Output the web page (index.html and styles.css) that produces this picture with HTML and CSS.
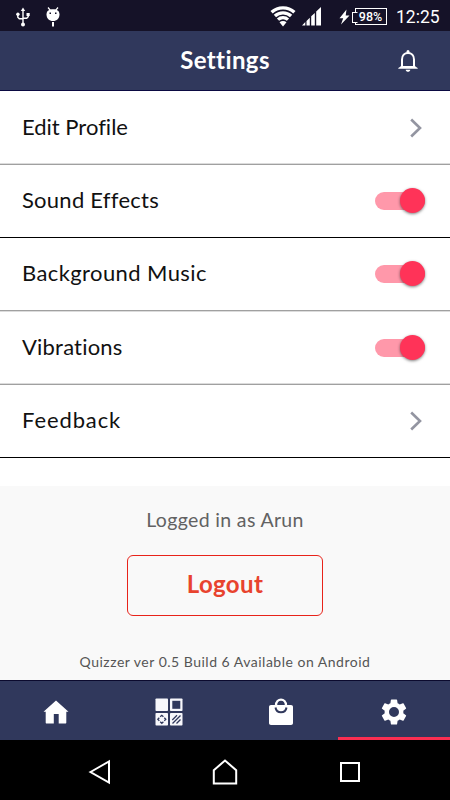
FILE: index.html
```html
<!DOCTYPE html>
<html lang="en">
<head>
  <meta charset="UTF-8">
  <meta name="viewport" content="width=device-width, initial-scale=1.0">
  <title>Settings</title>
  <link rel="stylesheet" href="styles.css">
</head>
<body>
<div class="statusbar">
  <svg class="usb" width="14" height="20" viewBox="0 0 14 20" fill="none" stroke="#fff" stroke-width="1.4">
    <path d="M7 3v13M1.8 7v3.2l1.5 1.600H7M12.200 7v2.700l-1.500 1.600H7"/>
    <path d="M7 .500l2.200 3.500H4.800z" fill="#fff" stroke="none"/>
    <circle cx="7" cy="17.500" r="2" fill="#fff" stroke="none"/>
    <circle cx="1.900" cy="7.300" r="1.700" fill="#fff" stroke="none"/>
    <path d="M10.500 6h3.200v3h-3.200z" fill="#fff" stroke="none"/>
  </svg>
  <svg class="debug" width="14" height="20" viewBox="0 0 14 20">
    <path d="M2 .500l2.500 3M12 .500l-2.500 3" stroke="#fff" stroke-width="1.200"/>
    <path d="M.500 7.500C.500 3.500 3.500 2.200 7 2.200s6.500 1.300 6.500 5.300c0 3.800-2.700 6.600-6.500 6.600S.500 11.300.500 7.500z" fill="#fff"/>
    <path d="M6 15h2v4.500H6z" fill="#fff"/>
    <path d="M3.500 5.500h1.500v1.500H3.500zM9 5.500h1.500v1.500H9z" fill="#151228"/>
  </svg>
  <svg class="wifi" width="26" height="21" viewBox="0 0 26 21" fill="none" stroke="#fff">
    <path d="M1.600 6.300C8 .300 18 .300 24.400 6.300M4.900 10C9.400 5.800 16.600 5.800 21.100 10M8 13.600c2.800-2.600 7.200-2.600 10 0" stroke-width="3.300"/>
    <path d="M13 20.500l-3.500-4.300c2-1.500 5-1.500 7 0z" fill="#fff" stroke="none"/>
  </svg>
  <svg class="signal" width="19" height="19" viewBox="0 0 19 19" fill="#fff">
    <path d="M0 18.500L3.300 15v3.500zM4.500 14l3.300-3.300v7.800H4.500zM9.200 9.300L12.800 6v12.500H9.200zM14.200 4.500L19 0v18.500h-4.800z"/>
  </svg>
  <svg class="bolt" width="11" height="16" viewBox="0 0 11 16" fill="#fff">
    <path d="M7.500 .500L.500 9.300h3.700L2 15.500l8.500-9H6.700z"/>
  </svg>
  <div class="battery">98%</div>
  <div class="clock">12:25</div>
</div>

<header class="header">
  <h1>Settings</h1>
  <svg class="bell" width="22" height="24" viewBox="0 0 22 24">
    <path d="M5 18V10.500C5 6.500 7.500 4 11 4s6 2.500 6 6.500V18" fill="none" stroke="#fff" stroke-width="2"/>
    <path d="M9.500 4V2.500a1.500 1.500 0 0 1 3 0V4zM1.200 19.700c0-1.200 1.300-1.200 2.800-2.700h14c1.500 1.500 2.800 1.500 2.800 2.700zM8.700 20.800h4.600c-.3 2.700-4.300 2.700-4.600 0z" fill="#fff"/>
  </svg>
</header>

<main class="settings">
  <div class="row row-tall row-fade-top">
    <span class="label profile">Edit Profile</span>
    <svg class="chevron" width="14" height="22" viewBox="0 0 14 22"><path d="M2.200 2.500L11 11l-8.800 8.500"/></svg>
  </div>
  <div class="row row-dark">
    <span class="label sound">Sound Effects</span>
    <span class="switch"></span>
  </div>
  <div class="row row-fade-bottom">
    <span class="label music">Background Music</span>
    <span class="switch"></span>
  </div>
  <div class="row row-tall row-fade-top">
    <span class="label vibrations">Vibrations</span>
    <span class="switch"></span>
  </div>
  <div class="row row-dark">
    <span class="label feedback">Feedback</span>
    <svg class="chevron" width="14" height="22" viewBox="0 0 14 22"><path d="M2.200 2.500L11 11l-8.800 8.500"/></svg>
  </div>
</main>

<section class="account">
  <p class="user">Logged in as Arun</p>
  <button class="logout">Logout</button>
  <p class="version">Quizzer ver 0.5 Build 6 Available on Android</p>
</section>

<nav class="tabs">
  <a class="tab">
    <svg width="26" height="24" viewBox="0 0 26 24" fill="#fff">
      <path d="M13 .500l12.500 11.200h-2.200V22.500c0 .700-.300 1-1 1h-6.600V14h-4.900v9.500H3.700c-.700 0-1-.300-1-1V11.700H.500z"/>
    </svg>
  </a>
  <a class="tab">
    <svg width="28" height="28" viewBox="0 0 28 28">
      <g fill="#f7f7fb">
        <rect x=".500" y=".500" width="12.500" height="12.500" rx=".800"/>
        <rect x="15" y=".500" width="12.500" height="12.500" rx=".800"/>
        <rect x=".500" y="15" width="12.500" height="12.500" rx=".800"/>
        <rect x="15" y="15" width="12.500" height="12.500" rx=".800"/>
      </g>
      <rect x="17.300" y="2.800" width="8" height="8" fill="#30385c"/>
      <path d="M5.200 18.800L6.800 17.300l1.600 1.500M5.200 23.800l1.600 1.500 1.600-1.500M4.300 19.700l-1.500 1.600 1.500 1.600M9.300 19.700l1.500 1.600-1.500 1.600M17.300 22l4.700-4.700M17.500 25.500l8-8M21.500 25.500l4-4" fill="none" stroke="#30385c" stroke-width="1.300"/>
    </svg>
  </a>
  <a class="tab">
    <svg width="24" height="28" viewBox="0 0 24 28">
      <path d="M2 7h20c1.200 0 2 .800 2 2v16c0 1.200-.800 2-2 2H2c-1.200 0-2-.800-2-2V9c0-1.200.800-2 2-2z" fill="#fff"/>
      <path d="M6.500 9.500c1 6.300 10 6.300 11 0" fill="none" stroke="#30385c" stroke-width="2"/>
      <path d="M8.800 7c.8-2.600 5.600-2.600 6.400 0z" fill="#30385c"/>
      <path d="M7 7.500C7 -.300 17 -.300 17 7.500" fill="none" stroke="#fff" stroke-width="2.300"/>
    </svg>
  </a>
  <a class="tab active">
    <svg width="30" height="30" viewBox="0 0 24 24" fill="#fff">
      <path d="M19.430 12.980c.040-.320.070-.640.070-.980s-.030-.660-.070-.980l2.110-1.650c.190-.150.240-.420.120-.640l-2-3.460c-.120-.220-.390-.300-.610-.220l-2.490 1c-.520-.400-1.080-.730-1.690-.980l-.380-2.650C14.460 2.180 14.250 2 14 2h-4c-.250 0-.460.180-.490.420l-.380 2.650c-.610.250-1.170.590-1.690.980l-2.490-1c-.230-.090-.490 0-.610.220l-2 3.460c-.130.220-.070.490.120.640l2.110 1.650c-.040.320-.070.650-.070.980s.030.660.070.980l-2.110 1.650c-.190.150-.240.420-.120.640l2 3.460c.120.220.390.300.610.220l2.490-1c.520.400 1.080.730 1.690.980l.380 2.650c.030.240.240.420.490.420h4c.250 0 .460-.180.490-.420l.380-2.650c.610-.250 1.170-.590 1.690-.980l2.490 1c.230.090.490 0 .610-.220l2-3.460c.120-.220.070-.490-.120-.640l-2.110-1.650zM12 16a4 4 0 1 1 0-8 4 4 0 0 1 0 8z"/>
    </svg>
  </a>
</nav>

<div class="navbar">
  <svg width="24" height="26" viewBox="0 0 24 26"><path d="M2.500 13L21 2.500v21z"/></svg>
  <svg width="26" height="26" viewBox="0 0 26 26"><path d="M1.800 11.200L13 1.500l11.200 9.700v13.300H1.800z"/></svg>
  <svg width="22" height="22" viewBox="0 0 22 22"><path d="M2 2h18v18H2z"/></svg>
</div>
</body>
</html>
```

FILE: styles.css
```css
* { box-sizing: border-box; }
body {
  margin: 0;
  width: 450px;
  height: 800px;
  overflow: hidden;
  display: flex;
  flex-direction: column;
  font-family: Lato, "Open Sans", sans-serif;
  font-variant-ligatures: none;
  background: #fff;
}
svg { display: block; flex: none; }
h1, p { margin: 0; }

.statusbar {
  height: 31px;
  display: flex;
  align-items: center;
  padding: 2px 10px 0 16px;
  background: #151228;
  color: #fff;
  font-family: Roboto, sans-serif;
}
.debug { margin-left: 16px; }
.wifi { margin-left: auto; }
.signal { margin-left: 6px; }
.bolt { margin-left: 18px; }
.battery {
  width: 32px;
  height: 17px;
  margin-left: 5px;
  border: 1px solid #fff;
  position: relative;
  font-size: 12.5px;
  font-weight: 500;
  line-height: 15px;
  text-align: center;
  text-indent: -1px;
}
.battery::before {
  content: "";
  position: absolute;
  left: -4px;
  top: 3px;
  width: 4px;
  height: 9px;
  border: 1px solid #fff;
  border-right-color: #151228;
  background: #151228;
}
.clock {
  width: 44px;
  margin-left: 9px;
  font-size: 17.5px;
  line-height: 20px;
}

.header {
  height: 60px;
  display: grid;
  grid-template-columns: 60px 1fr 60px;
  align-items: center;
  background: #30385c;
  border-bottom: 1px solid #0b0a42;
  color: #fff;
}
.header h1 {
  grid-column: 2;
  padding-bottom: 2px;
  text-align: center;
  font-size: 24px;
  line-height: 28px;
  letter-spacing: 0.4px;
}
.bell { margin-left: 7px; }

.row {
  height: 73px;
  display: flex;
  align-items: center;
  justify-content: space-between;
  padding: 0 24px 0 22px;
  border-bottom: 1px solid #a0a0a0;
}
.row-tall { height: 74px; }
.row-dark { border-bottom-color: #000; }
.row-fade-top { box-shadow: inset 0 -1px #dcdcdc; }
.row-fade-bottom { box-shadow: 0 1px #dcdcdc; }
.label {
  padding-bottom: 2px;
  font-size: 22px;
  line-height: 26px;
  color: #111;
  white-space: nowrap;
}
.profile { letter-spacing: 0; }
.sound { letter-spacing: 0.25px; }
.music { letter-spacing: 0.4px; }
.vibrations { letter-spacing: 0.2px; }
.feedback { letter-spacing: 0.9px; }
.chevron {
  margin-right: 3px;
  fill: none;
  stroke: #9395a1;
  stroke-width: 2.6;
}
.switch {
  width: 50px;
  height: 18px;
  margin-right: 1px;
  position: relative;
  border-radius: 9px;
  background: #ff98aa;
}
.switch::after {
  content: "";
  position: absolute;
  right: 0;
  top: -4px;
  width: 25px;
  height: 25px;
  border-radius: 50%;
  background: #ff3358;
  box-shadow: 0 1px 3px rgba(0,0,0,0.5);
}

.account {
  height: 194px;
  margin-top: 28px;
  padding-top: 21px;
  display: flex;
  flex-direction: column;
  align-items: center;
  background: #f9f9f9;
}
.user {
  font-size: 19.5px;
  line-height: 26px;
  letter-spacing: 0.35px;
  color: #626262;
}
.logout {
  width: 196px;
  height: 61px;
  margin-top: 22px;
  padding: 0 0 3px;
  border: 1px solid #e8231a;
  border-radius: 6px;
  background: transparent;
  font: bold 24px/28px Lato, sans-serif;
  letter-spacing: 0.4px;
  color: #e8432e;
}
.version {
  margin-top: 37px;
  font-size: 14px;
  line-height: 18px;
  letter-spacing: 0.5px;
  color: #555;
}

.tabs {
  height: 60px;
  display: grid;
  grid-template-columns: repeat(4, 1fr);
  border-top: 1px solid #0b0a2e;
  background: #30385c;
}
.tab {
  display: flex;
  align-items: center;
  justify-content: center;
  padding-top: 3px;
}
.active { box-shadow: inset 0 -3px #fa2e51; }

.navbar {
  height: 60px;
  display: grid;
  grid-template-columns: repeat(3, 125px);
  justify-content: center;
  align-items: center;
  justify-items: center;
  padding-top: 3px;
  background: #000;
}
.navbar svg {
  fill: none;
  stroke: #fff;
  stroke-width: 2;
}
```
